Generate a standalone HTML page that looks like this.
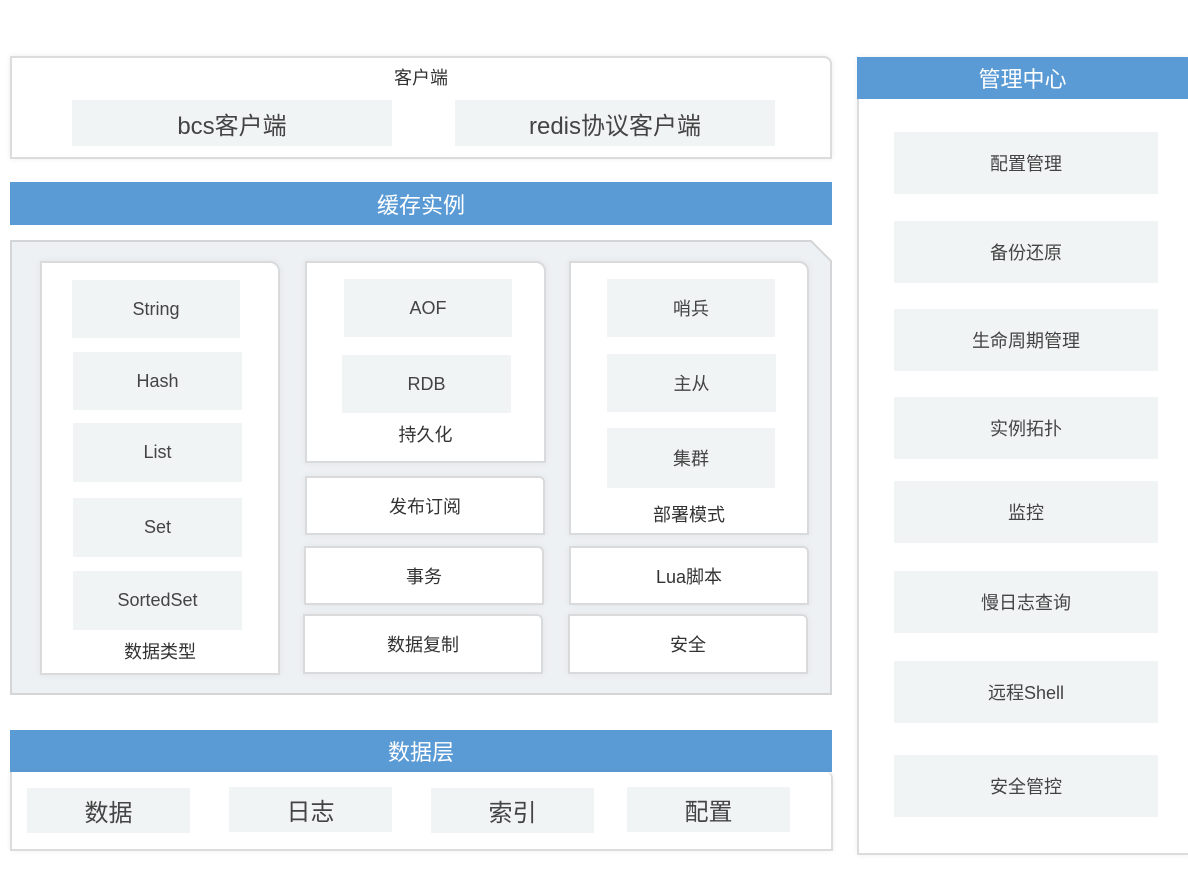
<!DOCTYPE html>
<html><head><meta charset="utf-8"><style>
*{margin:0;padding:0;box-sizing:border-box}
body{width:1188px;height:870px;background:#fff;position:relative;overflow:hidden;font-family:"Liberation Sans","Noto Sans CJK SC",sans-serif;color:#333}
div{position:absolute}
.c{display:flex;align-items:center;justify-content:center}
.g{background:#f1f4f5;font-size:18px;color:#444}
.bar{background:#5b9bd5;color:#fff;font-size:22px}
.card{background:#fff;border:2px solid #d8dadc;box-shadow:0 0 8px rgba(0,0,0,.06);font-size:18px;color:#333}
.lbl{font-size:18px;left:0;right:0;text-align:center}
</style></head><body>
<div style="left:10px;top:56px;width:822px;height:103px;border:2px solid #dcdcdc;border-top-right-radius:8px;box-shadow:0 0 6px rgba(0,0,0,.08)"></div>
<div style="left:10px;top:64px;width:822px;text-align:center;font-size:18px">客户端</div>
<div class="g c" style="left:72px;top:100px;width:320px;height:46px;font-size:24px">bcs客户端</div>
<div class="g c" style="left:455px;top:100px;width:320px;height:46px;font-size:24px">redis协议客户端</div>

<div class="bar c" style="left:10px;top:182px;width:822px;height:43px">缓存实例</div>

<svg style="position:absolute;left:10px;top:240px" width="823" height="455"><polygon points="1,1 801,1 821,21 821,454 1,454" fill="#eef1f3" stroke="#d3d5d7" stroke-width="2"/></svg>

<div class="card" style="left:40px;top:261px;width:240px;height:414px;border-top-right-radius:10px"></div>
<div class="g c" style="left:72px;top:280px;width:168px;height:58px">String</div>
<div class="g c" style="left:73px;top:352px;width:169px;height:58px">Hash</div>
<div class="g c" style="left:73px;top:423px;width:169px;height:59px">List</div>
<div class="g c" style="left:73px;top:498px;width:169px;height:59px">Set</div>
<div class="g c" style="left:73px;top:571px;width:169px;height:59px">SortedSet</div>
<div style="left:40px;top:638px;width:240px;text-align:center;font-size:18px">数据类型</div>

<div class="card" style="left:305px;top:261px;width:241px;height:202px;border-top-right-radius:10px"></div>
<div class="g c" style="left:344px;top:279px;width:168px;height:58px">AOF</div>
<div class="g c" style="left:342px;top:355px;width:169px;height:58px">RDB</div>
<div style="left:305px;top:421px;width:241px;text-align:center;font-size:18px">持久化</div>

<div class="card c" style="left:305px;top:476px;width:240px;height:59px;border-top-right-radius:6px">发布订阅</div>
<div class="card c" style="left:304px;top:546px;width:240px;height:59px;border-top-right-radius:6px">事务</div>
<div class="card c" style="left:303px;top:614px;width:240px;height:60px;border-top-right-radius:6px">数据复制</div>

<div class="card" style="left:569px;top:261px;width:240px;height:274px;border-top-right-radius:10px"></div>
<div class="g c" style="left:607px;top:279px;width:168px;height:58px">哨兵</div>
<div class="g c" style="left:607px;top:354px;width:169px;height:58px">主从</div>
<div class="g c" style="left:607px;top:428px;width:168px;height:60px">集群</div>
<div style="left:569px;top:501px;width:240px;text-align:center;font-size:18px">部署模式</div>

<div class="card c" style="left:569px;top:546px;width:240px;height:59px;border-top-right-radius:6px">Lua脚本</div>
<div class="card c" style="left:568px;top:614px;width:240px;height:60px;border-top-right-radius:6px">安全</div>

<div class="bar c" style="left:10px;top:730px;width:822px;height:42px">数据层</div>
<div style="left:10px;top:772px;width:823px;height:79px;border:2px solid #dcdcdc;border-top:none;border-top-right-radius:6px;box-shadow:0 0 6px rgba(0,0,0,.06)"></div>
<div class="g c" style="left:27px;top:788px;width:163px;height:45px;font-size:24px">数据</div>
<div class="g c" style="left:229px;top:787px;width:163px;height:45px;font-size:24px">日志</div>
<div class="g c" style="left:431px;top:788px;width:163px;height:45px;font-size:24px">索引</div>
<div class="g c" style="left:627px;top:787px;width:163px;height:45px;font-size:24px">配置</div>

<div style="left:857px;top:57px;width:335px;height:798px;border:2px solid #dcdcdc;box-shadow:0 0 6px rgba(0,0,0,.06)"></div>
<div class="bar c" style="left:857px;top:57px;width:331px;height:42px">管理中心</div>
<div class="g c" style="left:894px;top:132px;width:264px;height:62px">配置管理</div>
<div class="g c" style="left:894px;top:221px;width:264px;height:62px">备份还原</div>
<div class="g c" style="left:894px;top:309px;width:264px;height:62px">生命周期管理</div>
<div class="g c" style="left:894px;top:397px;width:264px;height:62px">实例拓扑</div>
<div class="g c" style="left:894px;top:481px;width:264px;height:62px">监控</div>
<div class="g c" style="left:894px;top:571px;width:264px;height:62px">慢日志查询</div>
<div class="g c" style="left:894px;top:661px;width:264px;height:62px">远程Shell</div>
<div class="g c" style="left:894px;top:755px;width:264px;height:62px">安全管控</div>
</body></html>
